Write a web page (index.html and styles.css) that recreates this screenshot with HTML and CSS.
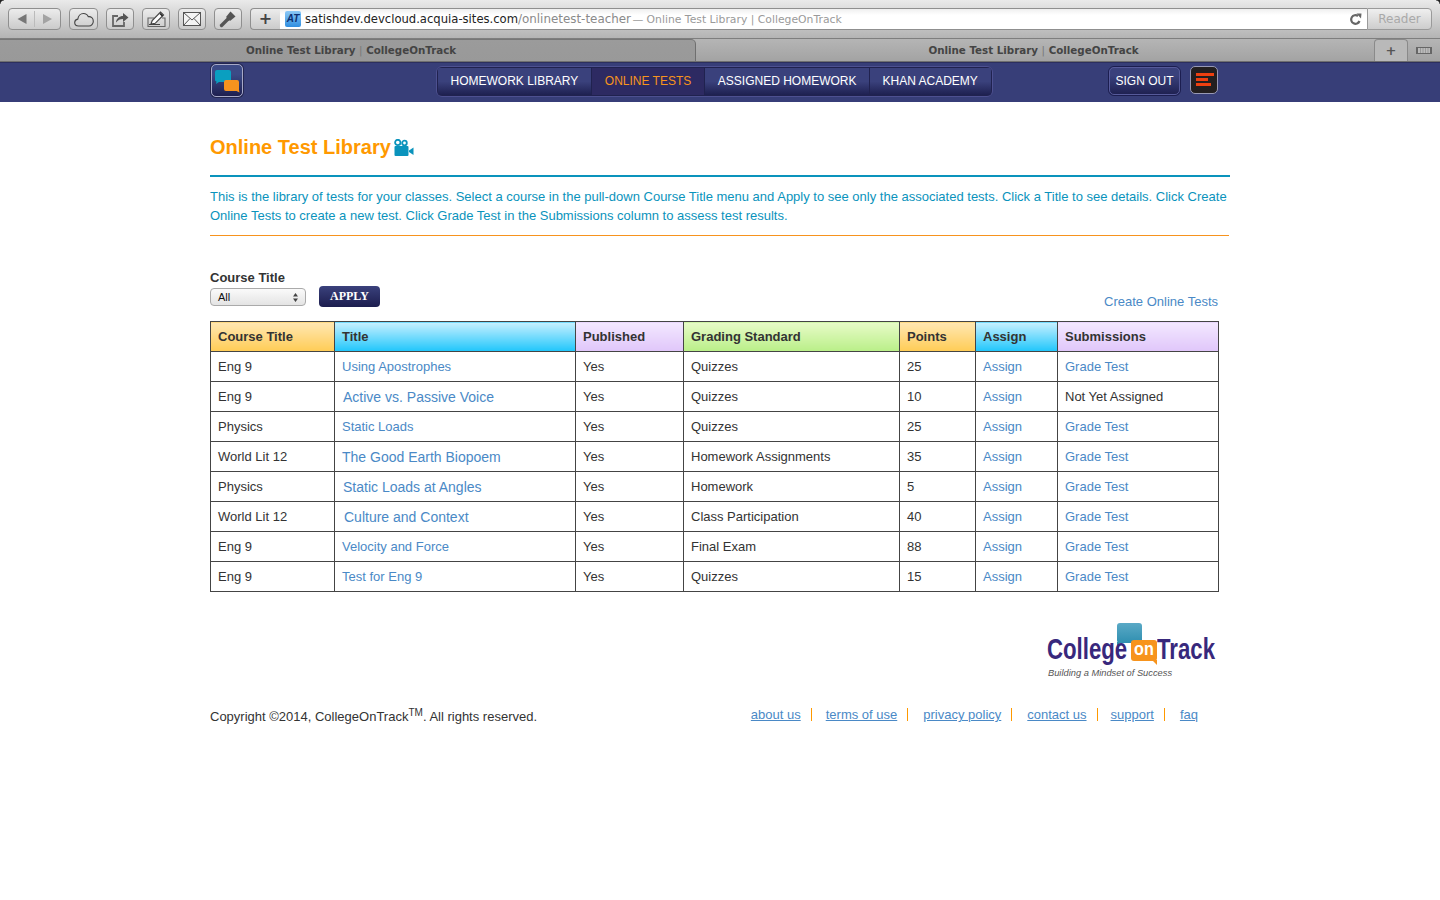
FILE: index.html
```html
<!DOCTYPE html>
<html lang="en">
<head>
<meta charset="utf-8">
<title>Online Test Library | CollegeOnTrack</title>
<link rel="stylesheet" href="styles.css">
</head>
<body>
<header class="chrome">
  <div class="toolbar">
    <div class="tb-btn tb-nav">
      <svg width="51" height="20" viewBox="0 0 51 20"><path d="M8.500 10l9-5v10z" fill="#777"/><path d="M43 10l-9-5v10z" fill="#a3a3a3"/><path d="M25.500 2v16" stroke="#bbb"/></svg>
    </div>
    <div class="tb-btn tb-wide">
      <svg width="20" height="15" viewBox="0 0 20 15"><path d="M4.500 14C2 14 .7 12.300.7 10.500S2 7.400 3.800 7.100C4.200 4 6.500 1.500 9.500 1.500c2.300 0 4 1.300 4.800 3.200 2.800-.4 5 1.600 5 4.500 0 2.700-2 4.800-4.300 4.800z" fill="none" stroke="#444" stroke-width="1.100"/></svg>
    </div>
    <div class="tb-btn">
      <svg width="18" height="16" viewBox="0 0 18 16"><path d="M7 5H2v10h11v-4" fill="none" stroke="#666" stroke-width="1.800"/><path d="M5 11.500c.3-4 3.500-6.500 7-6.500V2l5.500 4.500L12 11V8c-3 0-5 1-7 3.500z" fill="#555"/></svg>
    </div>
    <div class="tb-btn">
      <svg width="20" height="18" viewBox="0 0 20 18"><path d="M8 8H2v8.500h17V8h-3" fill="none" stroke="#666" stroke-width="1.100"/><path d="M5 14l1.200-3.500L14.500 2l3 3-8.300 8.300z" fill="#fff" stroke="#444" stroke-width="1.200"/><path d="M14 3.500l2.500 2.500" stroke="#222" stroke-width="1.600"/><path d="M3 14.500h11" stroke="#444"/></svg>
    </div>
    <div class="tb-btn">
      <svg width="18" height="14" viewBox="0 0 18 14"><rect x=".5" y=".5" width="17" height="13" fill="#f4f4f4" stroke="#555"/><path d="M.5.500L9 8l8.500-7.500M.5 13.500L7 6.500M17.500 13.500L11 6.500" fill="none" stroke="#555"/></svg>
    </div>
    <div class="tb-btn">
      <svg width="18" height="18" viewBox="0 0 18 18"><path d="M2.500 15.500L9 9" stroke="#555" stroke-width="3.400" stroke-linecap="round"/><path d="M7 7l4.500-5.500 5 5L11 11z" fill="#555"/></svg>
    </div>
    <div class="addr">
      <div class="addr-plus">+</div>
      <div class="addr-field">
        <span class="favicon">AT</span>
        <span class="url">satishdev.devcloud.acquia-sites.com</span><span class="url-path">/onlinetest-teacher</span><span class="url-title">&nbsp;— Online Test Library | CollegeOnTrack</span>
        <svg class="reload" width="13" height="13" viewBox="0 0 13 13"><path d="M10.500 8A4.300 4.300 0 1 1 9 3" fill="none" stroke="#666" stroke-width="2.200"/><path d="M7.500.5h5l-.5 5z" fill="#666"/></svg>
      </div>
      <div class="reader">Reader</div>
    </div>
  </div>
  <div class="tabs">
    <div class="tab tab-first">Online Test Library <span class="pipe">|</span> CollegeOnTrack</div>
    <div class="tab tab-second">Online Test Library <span class="pipe">|</span> CollegeOnTrack</div>
    <div class="tab-add">+</div>
    <div class="tab-list"><svg width="16" height="7" viewBox="0 0 16 7"><rect width="16" height="7" fill="#666"/><rect x="2" y="1" width="12" height="5" fill="#bbb"/><path d="M4.500 1v5M7 1v5M9.500 1v5M12 1v5" stroke="#999"/></svg></div>
  </div>
</header>

<nav class="site-nav">
  <div class="nav-inner">
    <a class="nav-logo" href="#">
      <svg width="28" height="28" viewBox="0 0 28 28"><path d="M4 3h12q2 0 2 2v8q0 2-2 2H6l-3 2 .5-2.500Q2 14 2 13V5q0-2 2-2z" fill="#0a9fc0"/><path d="M13 13h11q2 0 2 2v8l.5 2.500-3-1.500H13q-2 0-2-2v-7q0-2 2-2z" fill="#f7931e"/></svg>
    </a>
    <ul class="nav-menu">
      <li><a href="#">HOMEWORK LIBRARY</a></li>
      <li class="active"><a href="#">ONLINE TESTS</a></li>
      <li><a href="#">ASSIGNED HOMEWORK</a></li>
      <li class="nav-last"><a href="#">KHAN ACADEMY</a></li>
    </ul>
    <a class="sign-out" href="#">SIGN OUT</a>
    <a class="burger" href="#"><span class="b1"></span><span class="b2"></span><span class="b3"></span></a>
  </div>
</nav>

<main class="page">
  <h1 class="title">Online Test Library
    <svg class="cam" width="20" height="17" viewBox="0 0 20 17"><circle cx="3.800" cy="3.500" r="2.700" fill="none" stroke="#0a93bc" stroke-width="1.800"/><circle cx="10.500" cy="4" r="2.300" fill="none" stroke="#0a93bc" stroke-width="1.800"/><rect x=".5" y="7" width="14" height="10" rx="1" fill="#0a93bc"/><path d="M15 11.500l4.500-3v7.500L15 13z" fill="#0a93bc"/></svg>
  </h1>
  <p class="intro">This is the library of tests for your classes. Select a course in the pull-down Course Title menu and Apply to see only the associated tests. Click a Title to see details. Click Create Online Tests to create a new test. Click Grade Test in the Submissions column to assess test results.</p>

  <div class="filter">
    <div class="filter-left">
      <label class="filter-label">Course Title</label>
      <div class="filter-controls">
        <div class="select"><span>All</span><svg width="5" height="9" viewBox="0 0 5 9"><path d="M2.500 0L5 3.500H0zM2.500 9L0 5.500h5z" fill="#444"/></svg></div>
        <button class="apply" type="button">APPLY</button>
      </div>
    </div>
    <a class="link create" href="#">Create Online Tests</a>
  </div>

  <table class="tests">
    <colgroup>
      <col class="c1"><col class="c2"><col class="c3"><col class="c4"><col class="c5"><col class="c6"><col class="c7">
    </colgroup>
    <thead>
      <tr>
        <th class="orange">Course Title</th>
        <th class="blue">Title</th>
        <th class="violet">Published</th>
        <th class="green">Grading Standard</th>
        <th class="orange">Points</th>
        <th class="blue">Assign</th>
        <th class="violet">Submissions</th>
      </tr>
    </thead>
    <tbody>
      <tr><td>Eng 9</td><td><a class="link" href="#">Using Apostrophes</a></td><td>Yes</td><td>Quizzes</td><td>25</td><td><a class="link" href="#">Assign</a></td><td><a class="link" href="#">Grade Test</a></td></tr>
      <tr><td>Eng 9</td><td><a class="link big i1" href="#">Active vs. Passive Voice</a></td><td>Yes</td><td>Quizzes</td><td>10</td><td><a class="link" href="#">Assign</a></td><td>Not Yet Assigned</td></tr>
      <tr><td>Physics</td><td><a class="link" href="#">Static Loads</a></td><td>Yes</td><td>Quizzes</td><td>25</td><td><a class="link" href="#">Assign</a></td><td><a class="link" href="#">Grade Test</a></td></tr>
      <tr><td>World Lit 12</td><td><a class="link big" href="#">The Good Earth Biopoem</a></td><td>Yes</td><td>Homework Assignments</td><td>35</td><td><a class="link" href="#">Assign</a></td><td><a class="link" href="#">Grade Test</a></td></tr>
      <tr><td>Physics</td><td><a class="link big i1" href="#">Static Loads at Angles</a></td><td>Yes</td><td>Homework</td><td>5</td><td><a class="link" href="#">Assign</a></td><td><a class="link" href="#">Grade Test</a></td></tr>
      <tr><td>World Lit 12</td><td><a class="link big i2" href="#">Culture and Context</a></td><td>Yes</td><td>Class Participation</td><td>40</td><td><a class="link" href="#">Assign</a></td><td><a class="link" href="#">Grade Test</a></td></tr>
      <tr><td>Eng 9</td><td><a class="link" href="#">Velocity and Force</a></td><td>Yes</td><td>Final Exam</td><td>88</td><td><a class="link" href="#">Assign</a></td><td><a class="link" href="#">Grade Test</a></td></tr>
      <tr><td>Eng 9</td><td><a class="link" href="#">Test for Eng 9</a></td><td>Yes</td><td>Quizzes</td><td>15</td><td><a class="link" href="#">Assign</a></td><td><a class="link" href="#">Grade Test</a></td></tr>
    </tbody>
  </table>

  <div class="brand">
    <div class="brand-mark">
      <span class="brand-bubble"></span>
      <span class="brand-word brand-college">College</span><span class="brand-on"><span class="brand-on-text">on</span></span><span class="brand-word brand-track">Track</span>
    </div>
    <div class="brand-tag">Building a Mindset of Success</div>
  </div>

  <footer class="foot">
    <div class="copy">Copyright ©2014, CollegeOnTrack<sup>TM</sup>. All rights reserved.</div>
    <ul class="foot-links">
      <li><a href="#">about us</a></li>
      <li><a href="#">terms of use</a></li>
      <li><a href="#">privacy policy</a></li>
      <li><a href="#">contact us</a></li>
      <li><a href="#">support</a></li>
      <li><a href="#">faq</a></li>
    </ul>
  </footer>
</main>
</body>
</html>
```
FILE: styles.css
```css
* { box-sizing: border-box; }
html, body { margin: 0; padding: 0; background: #fff; }
body { font-family: "Liberation Sans", Arial, sans-serif; font-size: 13px; color: #333; height: 900px; overflow: hidden; position: relative; }
body::before, body::after { content: ""; position: absolute; top: 0; width: 4px; height: 4px; z-index: 2; }
body::before { left: 0; background: radial-gradient(circle at 100% 100%, transparent 3px, #222 4px); }
body::after { right: 0; background: radial-gradient(circle at 0 100%, transparent 3px, #222 4px); }
a { text-decoration: none; }
ul { list-style: none; margin: 0; padding: 0; }

.chrome { height: 62px; }
.toolbar { height: 39px; padding: 8px 8px 0 8px; display: flex; align-items: flex-start; gap: 8px; background: linear-gradient(#eaeaea, #b4b4b4); border-bottom: 1px solid #7e7e7e; }
.tb-btn { width: 28px; height: 22px; display: flex; align-items: center; justify-content: center; border: 1px solid #8f8f8f; border-radius: 4px; background: linear-gradient(#ececec, #cbcbcb); flex: none; }
.tb-nav { width: 53px; }
.tb-wide { width: 29px; }
.addr { display: flex; flex: 1; height: 22px; }
.addr-plus { width: 30px; height: 22px; border: 1px solid #8f8f8f; border-right: 0; border-radius: 4px 0 0 4px; background: linear-gradient(#ececec, #cbcbcb); font: bold 16px/19px "DejaVu Sans", sans-serif; color: #444; text-align: center; }
.addr-field { flex: 1; display: flex; align-items: center; background: linear-gradient(#efefef, #fff 30%); border: 1px solid #8f8f8f; border-left: 0; border-right: 0; font: 11.600px "DejaVu Sans", sans-serif; padding-left: 5px; white-space: nowrap; }
.favicon { width: 16px; height: 16px; margin-right: 4px; background: linear-gradient(#8cc8f6, #2f8ee0); border-radius: 2px; color: #0d2f70; font: italic bold 10px/16px "Liberation Sans", sans-serif; text-align: center; }
.url { color: #222; }
.url-path { color: #8a8a8a; font-size: 11.900px; }
.url-title { color: #9a9a9a; font-size: 10.800px; margin-left: -2px; }
.reload { margin-left: auto; margin-right: 5px; }
.reader { width: 65px; height: 22px; border: 1px solid #9a9a9a; border-radius: 0 4px 4px 0; background: linear-gradient(#efefef, #cdcdcd); color: #a9a9a9; font: 12px/20px "DejaVu Sans", sans-serif; text-align: center; }

.tabs { height: 23px; display: flex; background: linear-gradient(#b5b5b5, #a3a3a3); border-bottom: 1px solid #6f6f6f; font: bold 10.300px/21px "DejaVu Sans", sans-serif; color: #444; }
.tab { text-align: center; white-space: nowrap; }
.tab-first { width: 696px; padding-left: 7px; background: linear-gradient(#9b9b9b, #999); border-right: 1px solid #6f6f6f; border-top: 1px solid #777; border-top-right-radius: 5px; }
.tab-second { width: 678px; padding: 1px 3px 0 0; }
.tab-add { width: 34px; border: 1px solid #8a8a8a; border-bottom: 0; border-radius: 4px 4px 0 0; background: #b9b9b9; text-align: center; color: #555; font-size: 13px; }
.tab-list { flex: 1; display: flex; align-items: center; justify-content: center; }
.pipe { color: #777; font-weight: normal; }

.site-nav { height: 40px; background: #373e78; border-top: 1px solid #2c2f5e; }
.nav-inner { width: 1008px; margin-left: 211px; height: 100%; display: flex; align-items: flex-start; }
.nav-logo { width: 32px; height: 33px; margin-top: 1px; border: 1px solid #a7a9c7; box-shadow: 0 0 0 1px #23264f; border-radius: 5px; background: linear-gradient(#3c4a86 30%, #1e1f50); display: flex; align-items: center; justify-content: center; flex: none; }
.nav-menu { display: flex; width: 557px; margin-left: 193px; height: 31px; margin-top: 3px; padding: 1px; background: #20224f; border: 1px solid #4d5090; border-radius: 6px; overflow: hidden; gap: 1px; flex: none; }
.nav-menu a { display: block; height: 27px; padding: 0 12.500px; font-size: 12px; line-height: 27px; color: #fff; background: linear-gradient(#3a417c 50%, #1e2050); white-space: nowrap; }
.nav-menu .active a { padding: 0 13px; color: #f7941d; background: #2d2a62; }
.nav-last { flex: 1; }
.sign-out { margin-left: 115px; margin-top: 3px; height: 30px; width: 73px; flex: none; text-align: center; border: 1px solid #1c1e50; outline: 1px solid #565a9a; outline-offset: -2px; border-radius: 6px; background: linear-gradient(#3a417c 30%, #1e2050); color: #fff; font-size: 12px; line-height: 28px; }
.burger { margin-left: 9px; margin-top: 3px; width: 28px; height: 28px; border: 1px solid #9899b5; border-radius: 5px; background: #231f20; display: flex; flex-direction: column; gap: 2px; padding: 6px 5px; flex: none; }
.burger span { display: block; height: 3px; background: #ee4010; flex: none; }
.b1 { width: 18px; }
.b2 { width: 12px; }
.b3 { width: 15px; }

.page { width: 1020px; margin-left: 210px; }
.title { margin: 31px 0 0; padding-bottom: 14px; height: 44px; font-size: 20px; line-height: 28px; font-weight: bold; color: #f90; border-bottom: 2px solid #0a93bc; }
.cam { vertical-align: -2px; margin-left: -2px; }
.intro { width: 1019px; margin: 0; padding: 10px 0 10px; font-size: 13px; line-height: 19px; color: #0a93bc; border-bottom: 1px solid #f7931e; }

.filter { width: 1008px; margin-top: 33px; height: 39px; display: flex; justify-content: space-between; }
.filter-label { display: block; padding-top: 1px; height: 17px; font-weight: bold; font-size: 13px; line-height: 16px; color: #333; }
.filter-controls { display: flex; align-items: flex-start; gap: 13px; }
.select { width: 96px; height: 18px; margin-top: 2px; display: flex; align-items: center; justify-content: space-between; padding: 0 7px; border: 1px solid #aaa; border-radius: 4px; background: linear-gradient(#fafafa, #e4e4e4); font-size: 11px; color: #111; }
.apply { width: 61px; height: 21px; padding: 0; border: 0; border-radius: 4px; background: linear-gradient(#3a417c, #1c1d4e); color: #fff; font: bold 12px/21px "Liberation Serif", serif; }
.link { color: #4a89c6; }
.create { align-self: flex-end; line-height: 15px; margin-bottom: -1px; }

.tests { width: 1008px; margin-top: 13px; table-layout: fixed; border-collapse: collapse; border: 1px solid #444; }
.c1 { width: 124px; } .c2 { width: 241px; } .c3 { width: 108px; } .c4 { width: 216px; } .c5 { width: 76px; } .c6 { width: 82px; } .c7 { width: 161px; }
.tests th, .tests td { height: 30px; padding: 0 7px; border: 1px solid #444; text-align: left; font-size: 13px; color: #333; white-space: nowrap; }
.tests .link { color: #4a89c6; }
.tests .big { font-size: 14px; }
.tests th { font-weight: bold; }
.orange { background: linear-gradient(#ffe7b3, #ffcc55); }
.blue { background: linear-gradient(#c8f0ff, #1fc6fb); }
.violet { background: linear-gradient(#f3e8ff, #e0c6fa); }
.green { background: linear-gradient(#e8fbc8, #b9ef88); }
.i1 { margin-left: 1px; }
.i2 { margin-left: 2px; }

.brand { width: 1008px; margin-top: 31px; display: flex; flex-direction: column; align-items: flex-end; }
.brand-mark { position: relative; height: 46px; width: 172px; white-space: nowrap; padding: 6px 0 0 1px; display: flex; align-items: center; }
.brand-word { display: block; font: bold 30px/30px "Liberation Sans", sans-serif; transform: scaleX(.74); transform-origin: left center; color: #38287c; flex: none; }
.brand-college { width: 84px; }
.brand-track { width: 60px; }
.brand-on { position: relative; z-index: 1; width: 26px; height: 21px; margin-top: 2px; background: #f7941d; border-radius: 3px; text-align: center; flex: none; }
.brand-on::after { content: ""; position: absolute; right: 0; bottom: -4px; border-style: solid; border-width: 0 5px 5px 0; border-color: transparent #f7941d transparent transparent; }
.brand-on-text { display: inline-block; font: bold 18px/19px "Liberation Sans", sans-serif; color: #fff; transform: scaleX(.9); }
.brand-bubble { position: absolute; left: 71px; top: 0; width: 25px; height: 20px; background: linear-gradient(#5aa9c6, #2f8fb0); border-radius: 3px; }
.brand-bubble::after { content: ""; position: absolute; left: 0; bottom: -3px; border-style: solid; border-width: 4px 4px 0 0; border-color: #2f8fb0 transparent transparent transparent; }
.brand-tag { width: 172px; padding-left: 2px; font: italic 9.300px/11px "Liberation Sans", sans-serif; color: #555; margin-top: -1px; }

.foot { width: 1008px; display: flex; justify-content: space-between; margin-top: 28px; }
.copy { font-size: 13px; line-height: 19px; }
.copy sup { font-size: 10px; line-height: 0; }
.foot-links { display: flex; margin-right: 20px; margin-top: 1px; }
.foot-links li { padding: 0 10px 0 15px; border-right: 1px solid #f90; height: 13px; line-height: 13px; }
.foot-links li:nth-child(2) { padding-left: 14px; }
.foot-links li:nth-child(5) { padding-left: 13px; }
.foot-links li:last-child { border: 0; padding-right: 0; }
.foot-links a { color: #4a89c6; text-decoration: underline; font-size: 13px; }
```
